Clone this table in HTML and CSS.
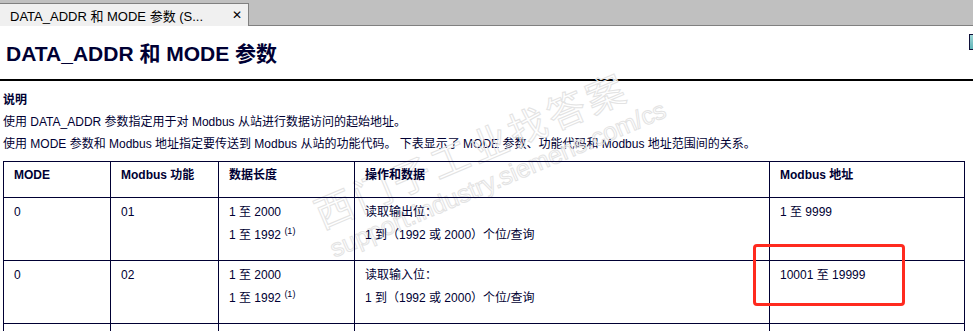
FILE: index.html
```html
<!DOCTYPE html>
<html lang="zh-CN">
<head>
<meta charset="utf-8">
<title>DATA_ADDR 和 MODE 参数</title>
<link rel="stylesheet" href="styles.css">
</head>
<body>
<div class="tabbar">
  <div class="tab">
    <span class="tab-label">DATA_ADDR 和 MODE 参数 (S...</span>
    <span class="tab-close">✕</span>
  </div>
</div>
<div class="page">
  <div class="title-row">
    <h1 class="title">DATA_ADDR 和 MODE 参数</h1>
    <div class="edge-btn"></div>
  </div>
  <div class="desc">
    <p class="desc-head">说明</p>
    <p>使用 DATA_ADDR 参数指定用于对 Modbus 从站进行数据访问的起始地址。</p>
    <p>使用 MODE 参数和 Modbus 地址指定要传送到 Modbus 从站的功能代码。 下表显示了 MODE 参数、功能代码和 Modbus 地址范围间的关系。</p>
  </div>
  <table class="params">
    <colgroup>
      <col class="c1"><col class="c2"><col class="c3"><col class="c4"><col class="c5">
    </colgroup>
    <thead>
      <tr>
        <th>MODE</th>
        <th>Modbus 功能</th>
        <th>数据长度</th>
        <th>操作和数据</th>
        <th>Modbus 地址</th>
      </tr>
    </thead>
    <tbody>
      <tr>
        <td>0</td>
        <td>01</td>
        <td>1 至 2000<br>1 至 1992 <sup>(1)</sup></td>
        <td>读取输出位：<br>1 到（1992 或 2000）个位/查询</td>
        <td>1 至 9999</td>
      </tr>
      <tr>
        <td>0</td>
        <td>02</td>
        <td>1 至 2000<br>1 至 1992 <sup>(1)</sup></td>
        <td>读取输入位：<br>1 到（1992 或 2000）个位/查询</td>
        <td>10001 至 19999</td>
      </tr>
      <tr class="last">
        <td>&nbsp;</td><td></td><td></td><td></td><td></td>
      </tr>
    </tbody>
  </table>
  <div class="watermark">
    <div class="wm-cn">西门子工业找答案</div>
    <div class="wm-en">support.industry.siemens.com/cs</div>
  </div>
  <div class="highlight"></div>
</div>
</body>
</html>
```
FILE: styles.css
```css
html, body {
  margin: 0;
  padding: 0;
  background: #ffffff;
  overflow: hidden;
}
body {
  font-family: "Liberation Sans", "Noto Sans CJK SC", sans-serif;
  color: #000033;
  width: 973px;
  height: 331px;
}
.tabbar {
  height: 25px;
  background: #c0c0c0;
  border-bottom: 1px solid #808080;
  display: flex;
  align-items: flex-end;
}
.tab {
  margin-bottom: -1px;
  background: #f0f0f0;
  border-top: 1px solid #808080;
  border-right: 1px solid #808080;
  display: flex;
  align-items: center;
  justify-content: space-between;
  padding: 0 6px 0 10px;
  width: 232px;
  height: 22px;
}
.tab-label {
  font-size: 13px;
  color: #000000;
  white-space: nowrap;
}
.tab-close {
  font-size: 12px;
  font-weight: bold;
  color: #000;
  font-family: "DejaVu Sans", sans-serif;
}
.page {
  position: relative;
  padding-left: 3px;
}
.title-row {
  display: flex;
  justify-content: space-between;
  align-items: flex-start;
  height: 53px;
  border-bottom: 2px solid #000000;
  margin-left: -3px;
  padding-left: 6px;
}
.title {
  margin: 0;
  padding-top: 16px;
  font-size: 21px;
  line-height: 24px;
  font-weight: bold;
  color: #000033;
}
.edge-btn {
  margin-top: 8px;
  margin-right: -8px;
  width: 10px;
  height: 14px;
  border: 1px solid #10103a;
  background: linear-gradient(#9fd6d6, #5fb4b8);
}
.desc {
  padding-top: 8px;
}
.desc p {
  margin: 0;
  font-size: 12px;
  line-height: 22px;
  white-space: nowrap;
}
.desc .desc-head {
  font-weight: bold;
}
.params {
  margin-top: 6px;
  border-collapse: collapse;
  table-layout: fixed;
  width: 961px;
  font-size: 12px;
  position: relative;
  z-index: 1;
}
.c1 { width: 107px; }
.c2 { width: 108px; }
.c3 { width: 136px; }
.c4 { width: 415px; }
.c5 { width: 195px; }
.params th, .params td {
  border: 1px solid #000033;
  text-align: left;
  vertical-align: top;
  padding: 2px 10px 0 10px;
  line-height: 23px;
  white-space: nowrap;
}
.params th {
  height: 33px;
  font-weight: bold;
}
.params td {
  height: 59px;
  padding-top: 3px;
}
.params sup {
  font-size: 9px;
  vertical-align: 5px;
  line-height: 0;
}
.watermark {
  position: absolute;
  left: 309px;
  top: 172px;
  transform: rotate(-23deg);
  transform-origin: left top;
  pointer-events: none;
  z-index: 0;
}
.wm-cn {
  font-size: 38px;
  line-height: 42px;
  color: transparent;
  -webkit-text-stroke: 1px #e3e3e3;
  letter-spacing: 4px;
  white-space: nowrap;
}
.wm-en {
  font-size: 25px;
  line-height: 28px;
  color: transparent;
  -webkit-text-stroke: 1px #e3e3e3;
  white-space: nowrap;
}
.highlight {
  position: absolute;
  left: 753px;
  top: 218px;
  width: 146px;
  height: 56px;
  border: 3px solid #ff2a1f;
  border-radius: 4px;
  z-index: 2;
}
```
